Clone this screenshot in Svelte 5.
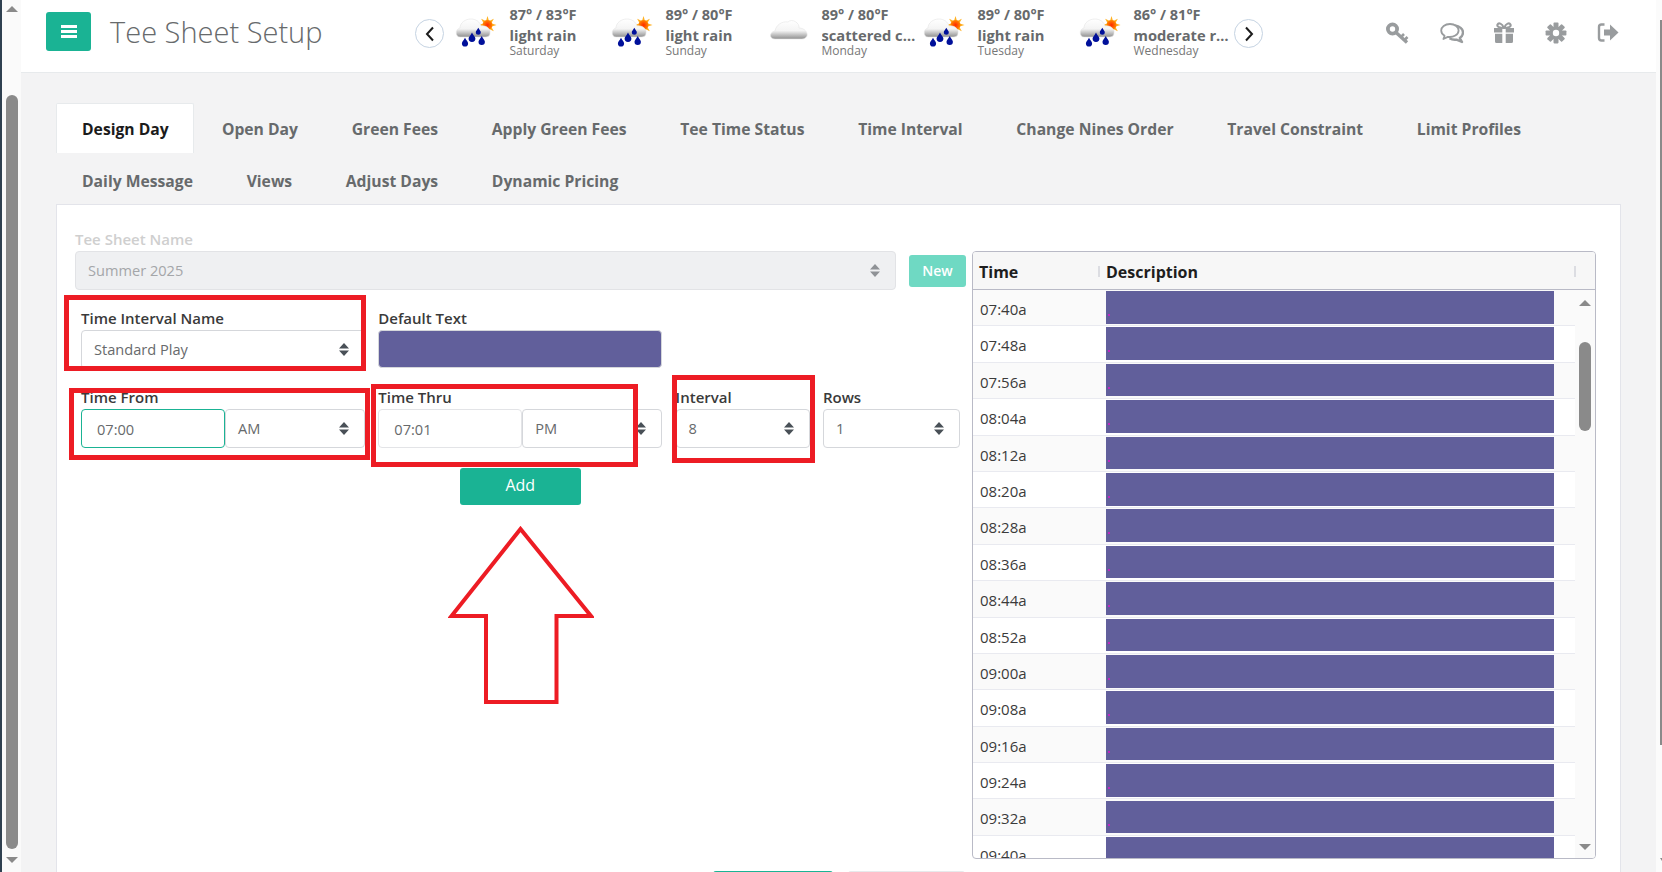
<script>
  const tabs1 = ['Design Day','Open Day','Green Fees','Apply Green Fees','Tee Time Status','Time Interval','Change Nines Order','Travel Constraint','Limit Profiles','Daily Message','Views','Adjust Days','Dynamic Pricing'];
  const weather = [
    { t:'87° / 83°F', d:'light rain', day:'Saturday', i:'rain' },
    { t:'89° / 80°F', d:'light rain', day:'Sunday', i:'rain' },
    { t:'89° / 80°F', d:'scattered clouds', day:'Monday', i:'cloud' },
    { t:'89° / 80°F', d:'light rain', day:'Tuesday', i:'rain' },
    { t:'86° / 81°F', d:'moderate rain', day:'Wednesday', i:'rain' }
  ];
  const times = ['07:40a','07:48a','07:56a','08:04a','08:12a','08:20a','08:28a','08:36a','08:44a','08:52a','09:00a','09:08a','09:16a','09:24a','09:32a','09:40a'];
  const drops = [[10,27.5,3.1],[17,22.5,3.4],[23.3,16.5,2.5],[26.7,25.8,3.2]];
  const rays = [0,45,90,135,180,225,270,315];
</script>

{#snippet sort()}
  <svg class="sort" viewBox="0 0 10 13" aria-hidden="true"><path d="M5 0 L10 5.4 H0 Z M0 7.6 H10 L5 13 Z"/></svg>
{/snippet}

{#snippet pick(text, cls = '')}
  <div class="control select {cls}"><span>{text}</span>{@render sort()}</div>
{/snippet}

<div class="screen">
  <div class="edge"></div>
  <div class="bar">
    <span class="tri up"></span>
    <div class="thumb"></div>
    <span class="tri down"></span>
  </div>

  <div class="main">
    <header>
      <button class="menu" aria-label="menu">
        <svg viewBox="0 0 16 13"><path d="M0 0H16V3H0ZM0 5H16V8H0ZM0 10H16V13H0Z"/></svg>
      </button>
      <h1>Tee Sheet Setup</h1>
      <button class="circle" aria-label="previous">
        <svg viewBox="0 0 12 16"><path d="M9 1.5 L3 8 L9 14.5"/></svg>
      </button>
      <div class="weather">
        {#each weather as w, n}
          <div class="day">
            <svg class="wx" viewBox="0 0 42 33" aria-hidden="true">
              <defs>
                <linearGradient id="cl{n}" x1="0" y1="0" x2="0" y2="1">
                  <stop offset="0" stop-color="#ffffff"/>
                  <stop offset=".55" stop-color="#f4f4f4"/>
                  <stop offset="1" stop-color="#8f8f8f"/>
                </linearGradient>
                <radialGradient id="sn{n}">
                  <stop offset="0" stop-color="#ff2a00"/>
                  <stop offset="1" stop-color="#ff8a00"/>
                </radialGradient>
              </defs>
              {#if w.i === 'rain'}
                {#each rays as a}
                  <path d="M32.5 10 L31.3 5 L32.5 1 L33.7 5 Z" fill="#ffb020" transform="rotate({a} 32.5 10)"/>
                {/each}
                <circle cx="32.5" cy="10" r="5" fill="url(#sn{n})"/>
                <path d="M5 22 C0 22 0 14 5 13 C5 8 10 4 16 4 C21 4 25 7 26 11 C31 10 36 14 35 18 C35 21 33 22 30 22 Z" fill="url(#cl{n})" stroke="#e4e4e4" stroke-width=".6"/>
                {#each drops as d}
                  <path d="M{d[0]} {d[1]-d[2]*1.5} C{d[0]+d[2]*.5} {d[1]-d[2]*.5} {d[0]+d[2]} {d[1]-d[2]*.2} {d[0]+d[2]} {d[1]+d[2]*.3} A{d[2]} {d[2]} 0 1 1 {d[0]-d[2]} {d[1]+d[2]*.3} C{d[0]-d[2]} {d[1]-d[2]*.2} {d[0]-d[2]*.5} {d[1]-d[2]*.5} {d[0]} {d[1]-d[2]*1.5} Z" fill="#00109a"/>
                {/each}
              {:else}
                <path d="M8 24 C2 24 2 17 8 16 C9 10 15 6 21 7 C25 3 33 8 32 13 C38 13 41 18 40 21 C39 23 37 24 35 24 Z" fill="url(#cl{n})" stroke="#e4e4e4" stroke-width=".6"/>
              {/if}
            </svg>
            <div class="wtext">
              <div class="temp">{w.t}</div>
              <div class="desc">{w.d}</div>
              <div class="dname">{w.day}</div>
            </div>
          </div>
        {/each}
      </div>
      <button class="circle next" aria-label="next">
        <svg viewBox="0 0 12 16"><path d="M3 1.5 L9 8 L3 14.5"/></svg>
      </button>
      <nav class="tools">
        <svg class="key" viewBox="0 0 24 22" aria-label="key"><circle cx="7.5" cy="7" r="4.6" class="ol" stroke-width="3.8"/><path d="M10.5 10 L22 20.5" class="ol" stroke-width="3.4"/><path d="M16 15 L19 12 M19.5 18 L22.5 15" class="ol" stroke-width="2.6"/></svg>
        <svg viewBox="0 0 24 22" aria-label="comments"><path d="M15 3.4 C19.5 4 23 7 23 10.5 C23 13 21.5 15 19.8 16 L22 20 L16.5 17.6 C14 17.9 11.5 17.5 9.5 16.3" class="ol" stroke-width="2.4"/><path d="M10 2 C4.8 2 1.2 5 1.2 8.5 C1.2 10.8 2.6 12.6 4.6 13.8 L3.4 17 L7.8 14.9 C13.4 15.6 18.6 12.8 18.6 8.5 C18.6 5 15 2 10 2 Z" class="ol w" stroke-width="1.8"/></svg>
        <svg viewBox="0 0 24 22" aria-label="gift"><path d="M12 6 C10 1 6.500 0.500 5.500 2.500 C4.500 4.800 8 6 12 6 C16 6 19.500 4.800 18.500 2.500 C17.500 .5 14 1 12 6 Z" class="ol" stroke-width="2"/><path d="M2 6H10.300V10.500H2ZM13.700 6H22V10.500H13.700ZM3 11.800H10.300V21H4.500Q3 21 3 19.500ZM13.700 11.800H21V19.500Q21 21 19.500 21H13.700Z" class="fl"/></svg>
        <svg viewBox="0 0 24 22" aria-label="settings">
          <g class="fl">
            {#each [0,45,90,135] as a}<rect x="9.500" y="0.600" width="5" height="20.800" rx=".8" transform="rotate({a} 12 11)"/>{/each}
          </g>
          <circle cx="12" cy="11" r="6.500" class="fl"/>
          <circle cx="12" cy="11" r="3.200" fill="#fff"/>
        </svg>
        <svg viewBox="0 0 24 22" aria-label="sign out"><path d="M8.500 2.500H5.500Q3 2.500 3 5V16Q3 18.500 5.500 18.500H8.500" class="ol" stroke-width="2.400"/><path d="M8 7.400H14V2.500L22.500 10.500L14 18.500V13.600H8Z" class="fl"/></svg>
      </nav>
    </header>

    <div class="page">
      <div class="tabs">
        {#each tabs1 as t, i}
          <div class="tab" class:active={i === 0}>{t}</div>
        {/each}
      </div>

      <section class="card">
        <div class="body">
          <div class="form">
            <div class="top">
              <div class="field grow">
                <div class="lab off">Tee Sheet Name</div>
                {@render pick('Summer 2025', 'disabled')}
              </div>
              <button class="btn new">New</button>
            </div>
            <div class="fgrid">
              <div class="field">
                <div class="lab">Time Interval Name</div>
                {@render pick('Standard Play')}
              </div>
              <div class="field span3">
                <div class="lab">Default Text</div>
                <div class="swatch"></div>
              </div>
              <div class="field">
                <div class="lab">Time From</div>
                <div class="pair">
                  <input class="control inp focus" value="07:00" />
                  {@render pick('AM')}
                </div>
              </div>
              <div class="field">
                <div class="lab">Time Thru</div>
                <div class="pair">
                  <input class="control inp" value="07:01" />
                  {@render pick('PM')}
                </div>
              </div>
              <div class="field">
                <div class="lab">Interval</div>
                {@render pick('8')}
              </div>
              <div class="field">
                <div class="lab">Rows</div>
                {@render pick('1')}
              </div>
              <button class="btn add">Add</button>
            </div>
          </div>

          <div class="table">
            <div class="thead">
              <div class="th time">Time</div>
              <div class="th dsc">Description</div>
            </div>
            <div class="tbody">
              <div class="rows">
                {#each times as t}
                  <div class="row">
                    <div class="tc">{t}</div>
                    <div class="dc"></div>
                  </div>
                {/each}
              </div>
              <div class="vbar">
                <span class="tri up small"></span>
                <div class="vthumb"></div>
                <span class="tri down small"></span>
              </div>
            </div>
          </div>
        </div>
        <div class="foot">
          <button class="fbtn green" aria-label="save"></button>
          <button class="fbtn gray" aria-label="cancel"></button>
        </div>

        <div class="rbox r1"></div>
        <div class="rbox r2"></div>
        <div class="rbox r3"></div>
        <div class="rbox r4"></div>
        <svg class="bigarrow" viewBox="0 0 146 180" aria-hidden="true">
          <path d="M72.500 3 L3.500 90 H38 V176 H108.500 V90 H143 Z"/>
        </svg>
      </section>
    </div>
  </div>

  <div class="rbar">
    <div class="rthumb"></div>
    <span class="rtri"></span>
  </div>
</div>

<style>
  :global(body) { margin: 0; overflow: hidden; background: #fff; }
  * { box-sizing: border-box; }
  .screen {
    display: flex; width: 1662px; height: 872px; overflow: hidden;
    font-family: "Open Sans", "Liberation Sans", sans-serif; font-size: 14px; color: #676a6c;
  }
  .edge { width: 2px; background: #2f4050; flex: none; }
  .bar { width: 19px; flex: none; background: #fafafa; position: relative; display: flex; flex-direction: column; align-items: center; }
  .thumb { width: 12px; height: 754px; margin-top: 83px; border-radius: 6px; background: #8a8a8a; }
  .tri { width: 0; height: 0; border-left: 6px solid transparent; border-right: 6px solid transparent; display: block; }
  .tri.up { border-bottom: 6px solid #8a8a8a; margin-top: 6px; }
  .tri.down { border-top: 6px solid #8a8a8a; margin-top: 8px; }

  .main { width: 1635px; flex: none; background: #f3f3f4; }
  .rbar { flex: 1; background: #fbfbfb; position: relative; display: flex; flex-direction: column; align-items: flex-end; }
  .rthumb { width: 2px; height: 725px; margin-top: 20px; background: #8a8a8a; }
  .rtri { width: 0; height: 0; margin-top: 113px; border-left: 2px solid transparent; border-top: 3px solid #8a8a8a; }

  header { height: 73px; background: #fff; border-bottom: 1px solid #e7eaec; display: flex; align-items: flex-start; padding-left: 25px; }
  .menu { width: 45px; height: 39px; margin-top: 12px; padding: 0; background: #1ab394; border: 0; border-radius: 3px; display: flex; align-items: center; justify-content: center; flex: none; }
  .menu svg { width: 16px; height: 13px; fill: #fff; }
  h1 { margin: 12px 0 0 19px; width: 305px; flex: none; font-size: 29px; line-height: 39px; font-weight: 300; color: #676a6c; white-space: nowrap; }
  .circle { width: 29px; height: 29px; margin-top: 19px; padding: 0; border-radius: 50%; background: #fff; border: 1px solid #c5d3e2; display: flex; align-items: center; justify-content: center; flex: none; }
  .circle svg { width: 12px; height: 16px; fill: none; stroke: #1c1c1c; stroke-width: 2; }
  .circle.next { margin-left: -1px; position: relative; }
  .weather { display: flex; margin-left: 11px; flex: none; }
  .day { width: 156px; display: flex; align-items: flex-start; flex: none; }
  .wx { width: 42px; height: 33px; margin-top: 15px; margin-right: 12.500px; flex: none; }
  .wtext { width: 98px; padding-top: 5px; }
  .temp { font-size: 14.500px; font-weight: 700; line-height: 20px; color: #676a6c; }
  .desc { font-size: 14.700px; font-weight: 700; line-height: 20px; color: #676a6c; white-space: nowrap; overflow: hidden; text-overflow: ellipsis; }
  .dname { font-size: 12px; line-height: 14px; margin-top: -1px; color: #777; }
  .tools { margin-left: 125px; display: flex; gap: 28px; margin-top: 22px; flex: none; }
  .tools svg { width: 24px; height: 22px; }
  .tools .key { margin-left: -3px; margin-right: 3px; }
  .ol { fill: none; stroke: #999c9e; stroke-linejoin: round; }
  .ol.w { fill: #fff; }
  .fl { fill: #999c9e; }

  .page { padding: 30px 35px 0 35px; }
  .tabs { display: flex; flex-wrap: wrap; row-gap: 2px; column-gap: 1.700px; margin-bottom: -1px; }
  .tab { height: 50px; padding: 2px 26px 0; display: flex; align-items: center; font-size: 15.700px; font-weight: 700; color: #676a6c; white-space: nowrap; }
  .tab.active { background: #fff; color: #1b1b1b; border: 1px solid #e7eaec; border-bottom: 0; border-radius: 2px 2px 0 0; padding: 1px 24.500px 0 25px; }

  .card { position: relative; background: #fff; border: 1px solid #e3e4ea; height: 720px; }
  .body { display: grid; grid-template-columns: 891px 624px; column-gap: 6px; padding-left: 18px; padding-top: 26px; }
  .form { min-width: 0; }
  .top { display: flex; align-items: flex-end; }
  .grow { width: 821px; }
  .lab { height: 18px; line-height: 16px; margin-bottom: 2px; font-size: 15px; font-weight: 600; color: #3a3a3a; white-space: nowrap; }
  .lab.off { color: #cfcfcf; }
  .control { height: 39px; border: 1px solid #d5d7db; border-radius: 4px; background: #fff; color: #676a6c; font: inherit; font-size: 14.600px; }
  .select { display: flex; align-items: center; justify-content: space-between; padding: 0 15px 0 12px; flex: 1; min-width: 0; }
  .select span { position: relative; top: -1px; }
  .sort { width: 10px; height: 13px; fill: #495057; flex: none; }
  .disabled { background: #eff0f2; border-color: #e2e3e6; color: #a4a6a9; }
  .disabled .sort { fill: #8f9296; }
  .btn { border: 0; border-radius: 3px; color: #fff; font: inherit; font-size: 14px; padding: 0; }
  .new { width: 57px; height: 32px; margin-left: 13px; margin-bottom: 3px; padding-bottom: 2px; background: #6fd9c3; font-weight: 600; }
  .fgrid { display: grid; grid-template-columns: 284px 284px 134px 137px; column-gap: 13.300px; row-gap: 20px; margin: 20px 0 0 6px; }
  .span3 { grid-column: span 3; }
  .swatch { width: 284px; height: 38px; background: #615f9b; border-radius: 4px; border: 1px solid #d5d7db; }
  .pair { display: flex; }
  .inp { width: 144px; flex: none; padding: 0 0 0 15px; outline: none; min-width: 0; border-color: #e3e4e7; }
  .inp.focus { border-color: #1ab394; }
  .add { grid-column: 2; justify-self: center; width: 121px; height: 37px; background: #1ab394; font-size: 16px; padding-bottom: 3px; }

  .table { height: 608px; margin-top: 20px; border: 1px solid #b9bac6; border-radius: 4px; overflow: hidden; display: flex; flex-direction: column; background: #fff; }
  .thead { height: 38px; flex: none; display: flex; align-items: center; background: #f7f7f7; border-bottom: 1px solid #b9bac6; font-size: 16px; font-weight: 700; color: #1e1e1e; position: relative; padding-top: 2px; }
  .th { white-space: nowrap; }
  .time { width: 133px; padding-left: 6px; position: relative; }
  .time::after { content: ""; position: absolute; right: 6px; top: 5px; height: 11px; width: 2px; background: #dcdde2; }
  .dsc { flex: 1; position: relative; }
  .dsc::after { content: ""; position: absolute; right: 19px; top: 5px; height: 11px; width: 2px; background: #dcdde2; }
  .tbody { flex: 1; min-height: 0; display: flex; overflow: hidden; }
  .rows { width: 602px; flex: none; }
  .row { height: 36.400px; display: flex; border-bottom: 1px solid #e9eaf0; }
  .row:nth-child(odd) { background: #fafafa; }
  .tc { width: 133px; flex: none; padding: 4px 0 0 7px; line-height: 30px; font-size: 15px; color: #3b3b3b; }
  .dc { width: 448px; height: 32.600px; margin-top: 1.100px; background: #615f9b; position: relative; }
  .dc::after { content: ""; position: absolute; left: 2px; top: 23px; width: 2px; height: 2px; background: #c026c0; }
  .vbar { flex: 1; background: #fafafa; display: flex; flex-direction: column; align-items: center; position: relative; }
  .vthumb { width: 12px; height: 89px; margin-top: 36px; background: #8a8a8a; border-radius: 6px; }
  .vbar .tri.up { margin-top: 10px; }
  .vbar .tri.down { position: absolute; bottom: 8px; margin: 0; }

  .foot { display: flex; justify-content: center; gap: 15px; margin-top: 12px; }
  .fbtn { height: 38px; padding: 0; border-radius: 3px; border: 0; }
  .green { width: 120px; background: #1ab394; }
  .gray { width: 117px; background: #e7eaec; }

  .rbox { position: absolute; border: 5px solid #ed1c24; pointer-events: none; }
  .r1 { left: 7px; top: 90px; width: 302px; height: 76px; }
  .r2 { left: 12px; top: 183px; width: 301px; height: 72px; }
  .r3 { left: 314px; top: 179px; width: 267px; height: 83px; }
  .r4 { left: 615px; top: 170px; width: 143px; height: 88px; }
  .bigarrow { position: absolute; left: 391px; top: 321px; width: 146px; height: 180px; fill: none; stroke: #ed1c24; stroke-width: 4; }
</style>
